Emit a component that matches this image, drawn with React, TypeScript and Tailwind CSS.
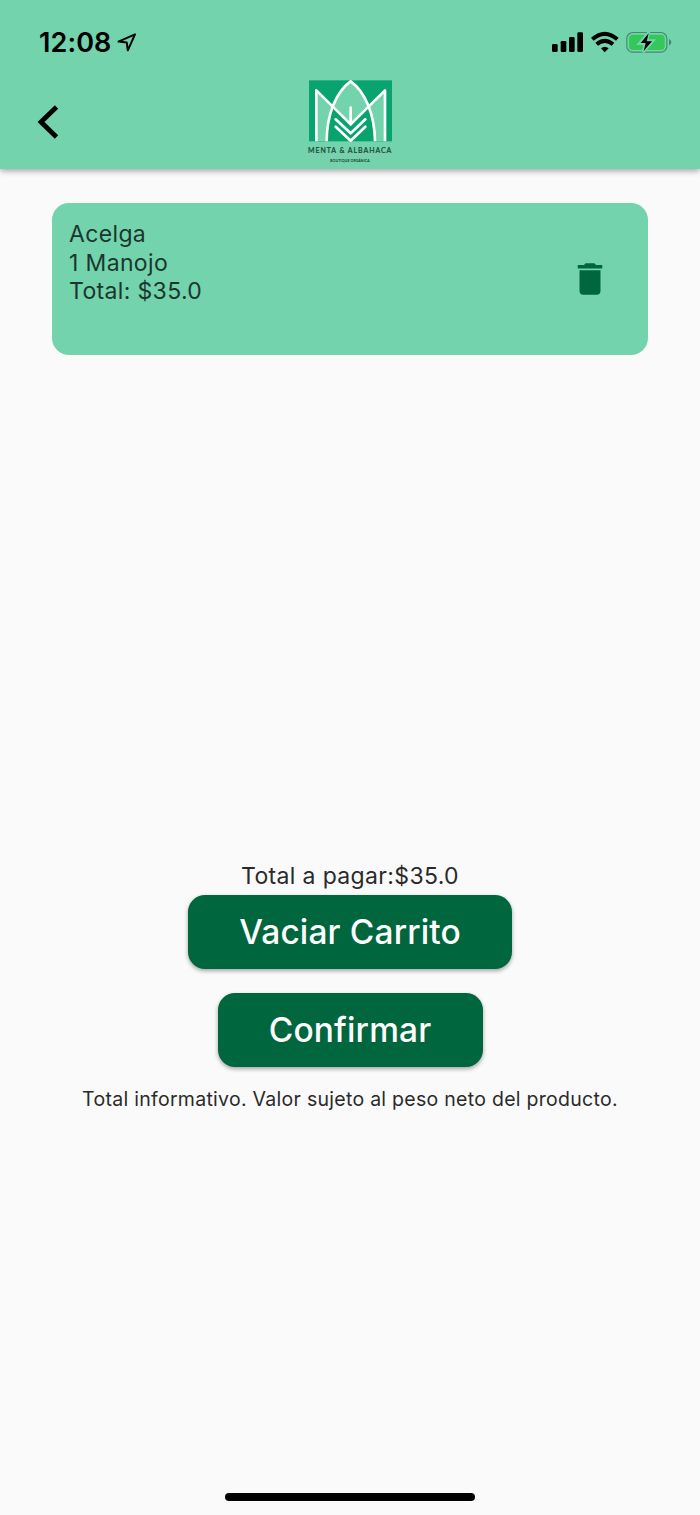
import React from 'react';

function StatusBar() {
  return (
    <div className="flex h-[70px] items-start justify-between pl-[39px]">
      <div className="flex items-start">
        <span className="mt-[26px] text-[27px] leading-[34px] font-semibold tracking-[0.1px]">12:08</span>
        <svg className="mt-[33px] ml-[6px]" width="20" height="20" viewBox="0 0 20 20" fill="none" stroke="black" strokeWidth="2" strokeLinejoin="round">
          <path d="M18 1.3 L1.5 8.6 L9.8 9.6 L10.8 17.3 Z" />
        </svg>
      </div>
      <svg width="150" height="50" viewBox="0 0 450 150" className="mt-5 mr-[10px]">
        <rect x="36" y="72" width="17" height="24" rx="4" />
        <rect x="62" y="63" width="17" height="33" rx="4" />
        <rect x="87" y="51" width="17" height="45" rx="4" />
        <rect x="112" y="37" width="17" height="59" rx="4" />
        <g fill="none" stroke="black" strokeWidth="12">
          <path d="M157 58 Q194 25 232 58" />
          <path d="M170 73 Q194 52 219 73" />
        </g>
        <path d="M183 85 Q194 76 206 85 L194 97 Z" />
        <rect x="260.500" y="37.500" width="120" height="59" rx="18" fill="none" stroke="#47896d" strokeWidth="3.500" />
        <rect x="267" y="44" width="107" height="46" rx="12" fill="#34c759" />
        <path d="M387 56 Q394 61 394 67 Q394 73 387 77 Z" fill="#47896d" />
        <path d="M326 37 L297 71 L315 71 L309 97 L340 62 L321 62 Z" stroke="#72d3ad" strokeWidth="8" />
        <path d="M326 40 L302 69 L317 69 L311 93 L336 64 L320 64 Z" />
      </svg>
    </div>
  );
}

function Logo() {
  return (
    <svg width="110" height="99" viewBox="0 0 330 297">
      <rect x="42" y="31" width="249" height="183" fill="#08a36f" />
      <path d="M64 213 V61 L167 163 L270 61 V213 Z" fill="#72d3ad" />
      <path d="M95 213 C95 135 123 65 167 34 C211 65 239 135 240 213 Z" fill="#08a36f" />
      <path d="M114 111 C126 76 144 50 167 34 C190 50 208 76 220 111 L167 163 Z" fill="#72d3ad" />
      <g fill="none" stroke="white" strokeWidth="8" strokeLinejoin="round">
        <path d="M64 214 V61 L167 163 L270 61 V214" />
        <path d="M95 214 C95 135 123 65 167 34 C211 65 239 135 240 214" />
        <path d="M167 113 V163 M122 148 L167 190 L211 148 M122 170 L167 212 L211 170" strokeLinecap="round" />
      </g>
      <text x="39" y="248" fontSize="21" textLength="250" fontFamily="Lato, sans-serif" fontWeight="500" fill="#1c4a35" stroke="#1c4a35" strokeWidth="0.6">MENTA &amp; ALBAHACA</text>
      <path d="M42 257 H290" stroke="#a3c0ad" strokeWidth="2" />
      <text x="106" y="277" fontSize="10.5" textLength="118" fontFamily="Lato, sans-serif" fontWeight="700" fill="#173d2c">BOUTIQUE ORGÁNICA</text>
    </svg>
  );
}

export default function App() {
  return (
    <div className="flex h-[1515px] w-[700px] flex-col bg-[#fafafa] font-[Inter,sans-serif] text-black">
      <header className="h-[169px] shrink-0 bg-[#72d3ad] shadow-[0_2px_6px_rgba(0,0,0,0.35)]">
        <StatusBar />
        <div className="grid grid-cols-[295px_110px_295px]">
          <button aria-label="Volver" className="mt-[35px] ml-[37px] h-[34px] w-[22px]">
            <svg width="22" height="34" viewBox="0 0 22 34" fill="none" stroke="black" strokeWidth="4.8">
              <path d="M19.500 2 L4 17 L19.500 32" />
            </svg>
          </button>
          <Logo />
        </div>
      </header>
      <main className="flex flex-1 flex-col items-center">
        <section className="mt-[34px] flex h-[152px] w-[596px] justify-between rounded-[17px] bg-[#72d3ad] pt-[17px] pr-[37px] pl-[17px]">
          <div className="text-[23px] leading-[28.7px] font-normal tracking-[0.35px] text-[#1b372d]">
            <p>Acelga</p>
            <p>1 Manojo</p>
            <p>Total: $35.0</p>
          </div>
          <button aria-label="Eliminar" className="mt-[38px] h-[42px] w-[42px]">
            <svg width="42" height="42" viewBox="0 0 24 24" fill="#00663d">
              <path d="M6 19c0 1.1.9 2 2 2h8c1.1 0 2-.9 2-2V7H6v12zM19 4h-3.5l-1-1h-5l-1 1H5v2h14V4z" />
            </svg>
          </button>
        </section>
        <p className="mt-[506px] text-[23px] leading-[30px] font-normal tracking-[0.35px] text-[#2a2a2a]">Total a pagar:$35.0</p>
        <button className="mt-[4px] h-[74px] w-[324px] rounded-[17px] bg-[#00663d] text-[33.5px] font-medium tracking-[0.14px] text-white shadow-[0_2px_4px_rgba(0,0,0,0.35)]">Vaciar Carrito</button>
        <button className="mt-[24px] h-[74px] w-[265px] rounded-[17px] bg-[#00663d] text-[33.5px] font-medium tracking-[0.14px] text-white shadow-[0_2px_4px_rgba(0,0,0,0.35)]">Confirmar</button>
        <p className="mt-[19px] text-[19.5px] leading-[26px] font-normal tracking-[0.28px] text-[#2a2a2a]">Total informativo. Valor sujeto al peso neto del producto.</p>
        <div className="mt-auto mb-[14px] h-[8px] w-[250px] rounded-full bg-black" />
      </main>
    </div>
  );
}
